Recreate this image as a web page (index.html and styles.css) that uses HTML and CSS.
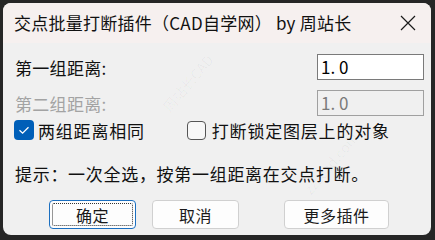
FILE: index.html
```html
<!DOCTYPE html>
<html lang="zh-CN">
<head>
<meta charset="utf-8">
<link rel="stylesheet" href="styles.css">
</head>
<body>
<div class="win">
  <div class="titlebar">
    <span class="title">交点批量打断插件（CAD自学网） by 周站长</span>
    <svg class="close" width="16" height="16" viewBox="0 0 16 16"><path d="M1 1 L15 15 M15 1 L1 15" stroke="#1a1a1a" stroke-width="1.2" fill="none"/></svg>
  </div>
  <div class="content">
    <div class="row">
      <span class="label">第一组距离:</span>
      <div class="input">1. 0</div>
    </div>
    <div class="row row2">
      <span class="label disabled">第二组距离:</span>
      <div class="input input-disabled">1. 0</div>
    </div>
    <div class="checks">
      <label class="check">
        <span class="box box-on"><svg width="20" height="20" viewBox="0 0 20 20"><path d="M5.5 10.2 L8.6 13.2 L14.5 7.2" stroke="#fff" stroke-width="1.3" fill="none"/></svg></span>
        <span>两组距离相同</span>
      </label>
      <label class="check check2">
        <span class="box box-off"></span>
        <span>打断锁定图层上的对象</span>
      </label>
    </div>
    <div class="tip">提示：一次全选，按第一组距离在交点打断。</div>
    <div class="buttons">
      <div class="btn btn-default"><span class="focus">确定</span></div>
      <div class="btn btn-cancel">取消</div>
      <div class="btn btn-more">更多插件</div>
    </div>
    <div class="wm wm1">周站长CAD</div>
    <div class="wm wm2">zzzcad.com</div>
  </div>
</div>
</body>
</html>
```
FILE: styles.css
```css
html, body {
  margin: 0;
  padding: 0;
  background: #262626;
  width: 435px;
  height: 240px;
  overflow: hidden;
}
body {
  font-family: "Noto Sans CJK SC", "Noto Sans", sans-serif;
}
.win {
  margin: 3px 0 0 3px;
  width: 428px;
  height: 232px;
  border-radius: 8px;
  overflow: hidden;
  background: #f0f0f0;
  display: flex;
  flex-direction: column;
}
.titlebar {
  height: 40px;
  background: #f6f0ef;
  display: flex;
  align-items: center;
  padding-left: 11px;
  flex: none;
}
.title {
  font-size: 17px;
  color: #111;
  letter-spacing: 0.25px;
  flex: 1;
  line-height: 40px;
  margin-top: -1px;
}
.close {
  margin-right: 15px;
  margin-top: -1px;
}
.content {
  position: relative;
  flex: 1;
  padding: 11px 0 0 12px;
  font-size: 17px;
  color: #111;
}
.row {
  display: flex;
  align-items: center;
  justify-content: space-between;
  height: 26px;
  padding-right: 7px;
}
.row2 {
  margin-top: 10px;
}
.label {
  letter-spacing: 0.3px;
}
.disabled {
  color: #a3a3a3;
}
.input {
  height: 24px;
  border: 1px solid #7a7a7a;
  background: #fff;
  font-size: 17px;
  line-height: 24px;
  padding-left: 3px;
  box-sizing: content-box;
  width: 102px;
  color: #000;
}
.input-disabled {
  background: #f0f0f0;
  border-color: #a0a0a0;
  color: #7a7a7a;
}
.checks {
  display: flex;
  align-items: center;
  margin-top: 4px;
  height: 20px;
  margin-left: -1px;
}
.check {
  display: flex;
  align-items: center;
  gap: 4px;
  letter-spacing: 0.8px;
}
.check2 {
  margin-left: 42px;
  gap: 6px;
}
.box {
  width: 20px;
  height: 20px;
  border-radius: 4px;
  box-sizing: border-box;
  display: block;
}
.box svg { display: block; }
.box-on {
  background: #005fb8;
}
.box-off {
  width: 19px;
  height: 19px;
  border: 1px solid #555;
  background: #f7f7f7;
}
.tip {
  margin-top: 21px;
  letter-spacing: 0.7px;
}
.buttons {
  display: flex;
  margin-top: 14px;
  margin-left: 34px;
}
.btn {
  height: 29px;
  box-sizing: border-box;
  border: 1px solid #d0d0d0;
  border-radius: 4px;
  background: #fdfdfd;
  display: flex;
  align-items: center;
  justify-content: center;
  font-size: 16px;
  color: #1a1a1a;
  letter-spacing: 0.5px;
}
.btn-default {
  width: 87px;
  border-color: #1b6fc0;
  padding: 2px;
}
.focus {
  flex: 1;
  align-self: stretch;
  border: 1px dotted #333;
  display: flex;
  align-items: center;
  justify-content: center;
  border-radius: 2px;
}
.btn-cancel {
  width: 87px;
  margin-left: 16px;
}
.btn-more {
  width: 105px;
  margin-left: 45px;
}
.wm {
  position: absolute;
  color: rgba(0,0,0,0.035);
  font-size: 14px;
  transform: rotate(-50deg);
  white-space: nowrap;
  pointer-events: none;
}
.wm1 { left: 150px; top: 30px; }
.wm2 { left: 290px; top: 110px; }
```
